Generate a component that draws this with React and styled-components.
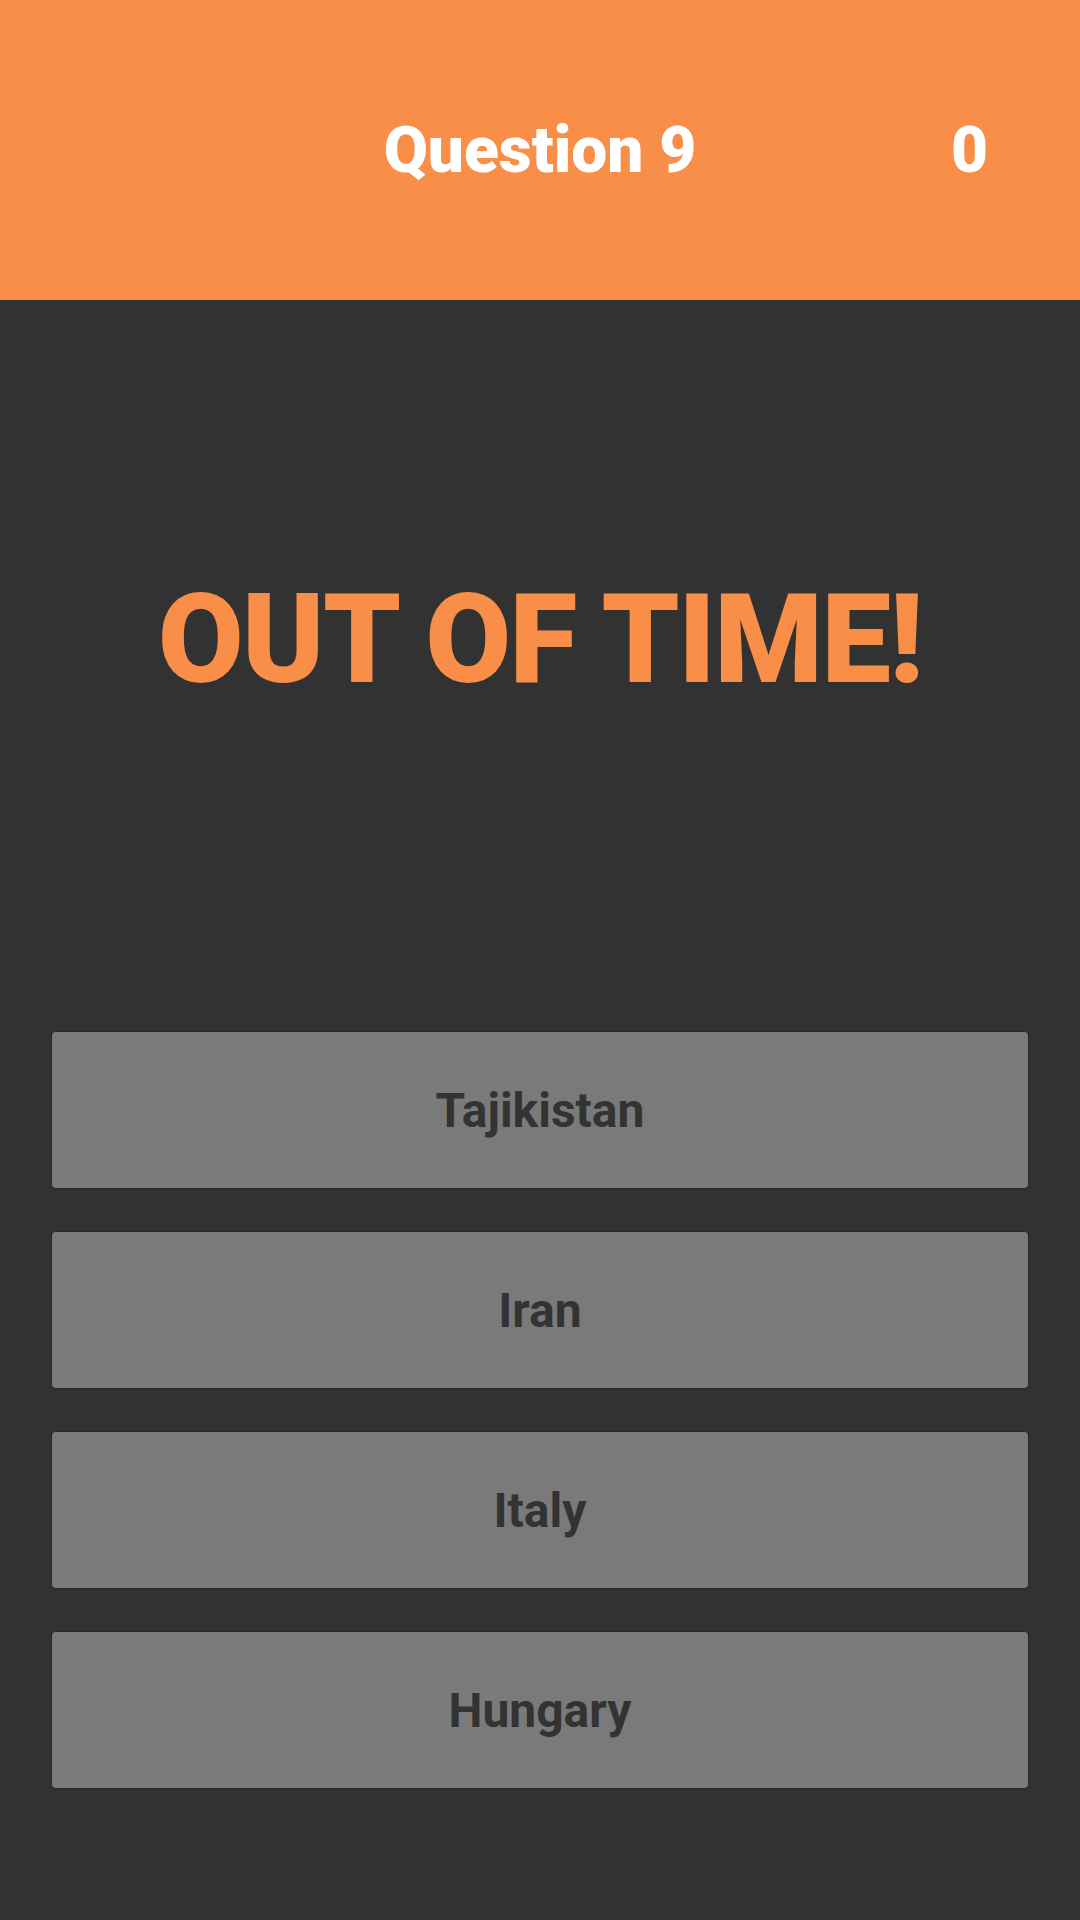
import React from "react";
import styled, { createGlobalStyle } from "styled-components";

const GlobalStyle = createGlobalStyle`
  html, body {
    margin: 0;
    padding: 0;
    background: #323232;
  }
  body {
    font-family: Roboto, "Liberation Sans", sans-serif;
  }
`;

const answers = ["Tajikistan", "Iran", "Italy", "Hungary"];

const App = () => (
  <Screen>
    <GlobalStyle />
    <Header>
      <span />
      <QuestionTitle>Question 9</QuestionTitle>
      <Score>0</Score>
    </Header>
    <Body>
      <Message>OUT OF TIME!</Message>
      <AnswerList>
        {answers.map((answer) => (
          <AnswerButton key={answer}>{answer}</AnswerButton>
        ))}
      </AnswerList>
    </Body>
  </Screen>
);

const Screen = styled.div`
  width: 1080px;
  min-height: 1920px;
  display: flex;
  flex-direction: column;
  background: #323232;
`;

const Header = styled.header`
  height: 300px;
  box-sizing: border-box;
  background: #f88e48;
  display: grid;
  grid-template-columns: 1fr auto 1fr;
  align-items: start;
  padding: 113px 92px 0;
  color: #ffffff;
  font-weight: 900;
  font-size: 64px;
  line-height: 75px;
`;

const QuestionTitle = styled.h1`
  margin: 0;
  font: inherit;
  text-align: center;
`;

const Score = styled.span`
  justify-self: end;
`;

const Body = styled.main`
  flex: 1;
  display: flex;
  flex-direction: column;
  padding: 267px 52px 0;
`;

const Message = styled.h2`
  margin: 0;
  text-align: center;
  color: #f88e48;
  font-size: 124px;
  font-weight: 900;
  line-height: 145px;
  letter-spacing: -1.5px;
`;

const AnswerList = styled.div`
  margin-top: 320px;
  display: flex;
  flex-direction: column;
  gap: 44px;
`;

const AnswerButton = styled.button`
  height: 156px;
  border: none;
  border-radius: 4px;
  background: #7a7a7a;
  box-shadow: 0 0 1px 1px rgba(0, 0, 0, 0.18);
  color: #333333;
  font-family: Roboto, "Liberation Sans", sans-serif;
  font-size: 48px;
  font-weight: 700;
  cursor: pointer;
`;

export default App;
